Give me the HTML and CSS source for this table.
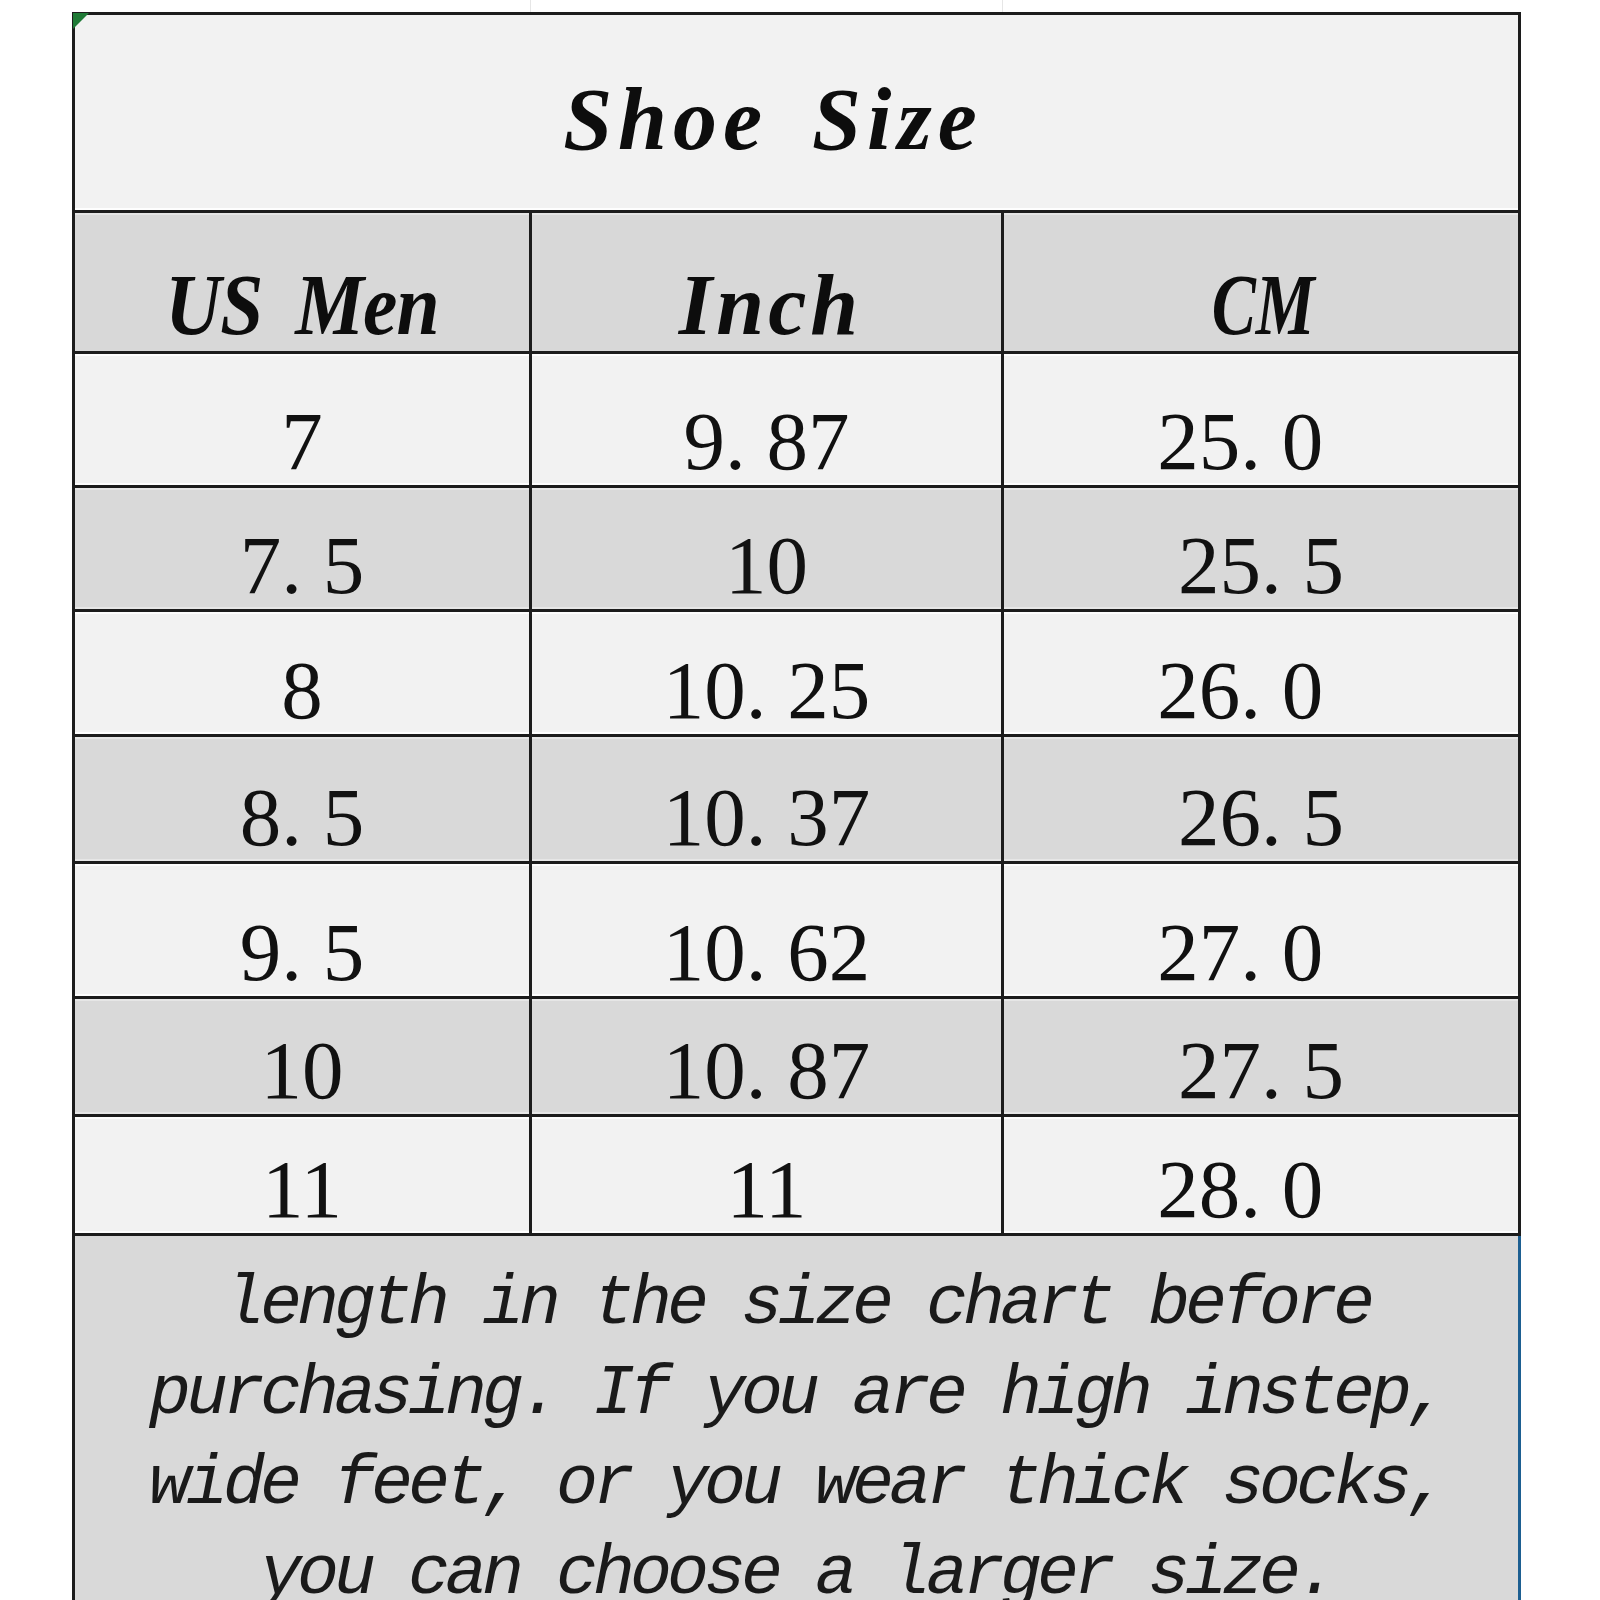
FILE: index.html
```html
<!DOCTYPE html>
<html lang="en">
<head>
<meta charset="utf-8">
<title>Shoe Size</title>
<link rel="stylesheet" href="styles.css">
</head>
<body>
<div class="top-strip"><span></span><span></span><span></span></div>
<div class="sheet">
  <div class="grid">
    <div class="cell title"><span class="corner"></span><span class="title-text">Shoe Size</span></div>

    <div class="cell head"><span class="label us">US Men</span></div>
    <div class="cell head"><span class="label inch">Inch</span></div>
    <div class="cell head"><span class="label cm">CM</span></div>

    <div class="cell light"><span class="num">7</span></div>
    <div class="cell light"><span class="num">9<span class="dot">.</span>87</span></div>
    <div class="cell light"><span class="num trail">25<span class="dot">.</span>0</span></div>

    <div class="cell dark"><span class="num">7<span class="dot">.</span>5</span></div>
    <div class="cell dark"><span class="num">10</span></div>
    <div class="cell dark"><span class="num">25<span class="dot">.</span>5</span></div>

    <div class="cell light"><span class="num">8</span></div>
    <div class="cell light"><span class="num">10<span class="dot">.</span>25</span></div>
    <div class="cell light"><span class="num trail">26<span class="dot">.</span>0</span></div>

    <div class="cell dark"><span class="num">8<span class="dot">.</span>5</span></div>
    <div class="cell dark"><span class="num">10<span class="dot">.</span>37</span></div>
    <div class="cell dark"><span class="num">26<span class="dot">.</span>5</span></div>

    <div class="cell light"><span class="num">9<span class="dot">.</span>5</span></div>
    <div class="cell light"><span class="num">10<span class="dot">.</span>62</span></div>
    <div class="cell light"><span class="num trail">27<span class="dot">.</span>0</span></div>

    <div class="cell dark"><span class="num">10</span></div>
    <div class="cell dark"><span class="num">10<span class="dot">.</span>87</span></div>
    <div class="cell dark"><span class="num">27<span class="dot">.</span>5</span></div>

    <div class="cell light"><span class="num">11</span></div>
    <div class="cell light"><span class="num">11</span></div>
    <div class="cell light"><span class="num trail">28<span class="dot">.</span>0</span></div>
  </div>
  <div class="note">
    <div class="line">length in the size chart before</div>
    <div class="line">purchasing. If you are high instep,</div>
    <div class="line">wide feet, or you wear thick socks,</div>
    <div class="line">you can choose a larger size.</div>
  </div>
</div>
</body>
</html>
```

FILE: styles.css
```css
html, body {
  margin: 0;
  padding: 0;
  background: #ffffff;
  height: 1600px;
  overflow: hidden;
}

.top-strip {
  margin-left: 72px;
  width: 1449px;
  height: 12px;
  box-sizing: border-box;
  padding: 0 3px;
  display: grid;
  grid-template-columns: 454px 469px 514px;
  column-gap: 3px;
}

.top-strip span + span {
  border-left: 1px solid #e6e6e6;
  margin-left: -2px;
}

.sheet {
  margin-left: 72px;
  width: 1449px;
}

.grid {
  display: grid;
  grid-template-columns: 454px 469px 514px;
  grid-template-rows: 195px 138px 131px 121px 122px 124px 132px 115px 116px;
  gap: 3px;
  padding: 3px;
  background: #1c1c1c;
}

.cell {
  display: flex;
  justify-content: center;
  align-items: flex-end;
  color: #111111;
}

.light {
  background: #f2f2f2;
  box-shadow: inset 0 2px 0 rgba(255, 255, 255, 0.8), inset 0 -2px 0 rgba(255, 255, 255, 0.9);
  padding-bottom: 2px;
}

.dark {
  background: #d9d9d9;
  box-shadow: inset 0 2px 0 rgba(255, 255, 255, 0.35), inset 0 -2px 0 rgba(255, 255, 255, 0.35);
  padding-bottom: 2px;
}

.title {
  grid-column: 1 / -1;
  position: relative;
  background: #f2f2f2;
  box-shadow: inset 0 -2px 0 rgba(255, 255, 255, 0.9);
  padding: 0 47px 46px 0;
}

.corner {
  position: absolute;
  top: -2px;
  left: -2px;
  width: 0;
  height: 0;
  border-top: 16px solid #1f7a36;
  border-right: 16px solid transparent;
}

.title-text {
  font-family: "Liberation Serif", "Times New Roman", serif;
  font-style: italic;
  font-weight: bold;
  font-size: 88px;
  line-height: 1;
  letter-spacing: 6px;
  word-spacing: 16px;
  color: #0d0d0d;
}

.head {
  background: #d8d8d8;
  box-shadow: inset 0 2px 0 rgba(255, 255, 255, 0.35);
  padding-bottom: 3px;
}

.label {
  display: inline-block;
  font-family: "Liberation Serif", "Times New Roman", serif;
  font-style: italic;
  font-weight: bold;
  font-size: 86px;
  line-height: 1;
  color: #0d0d0d;
}

.us {
  letter-spacing: -1px;
  word-spacing: 16px;
  transform: scaleX(0.9);
}

.inch {
  letter-spacing: 4px;
  padding-left: 8px;
}

.cm {
  transform: scaleX(0.77);
  padding-left: 6px;
}

.num {
  display: block;
  font-family: "Liberation Serif", "Times New Roman", serif;
  font-size: 83px;
  line-height: 1;
  color: #111111;
}

.dot {
  display: inline-block;
  width: 0.5em;
  text-align: left;
}

.trail {
  padding-right: 0.5em;
}

.note {
  height: 364px;
  box-sizing: border-box;
  background: #d9d9d9;
  border-left: 3px solid #1c1c1c;
  border-right: 3px solid #1d5f91;
  padding-top: 24px;
  overflow: hidden;
  font-family: "Liberation Mono", "Courier New", monospace;
  font-style: italic;
  font-size: 70px;
  line-height: 90px;
  letter-spacing: -5px;
  text-align: center;
  color: #1a1a1a;
}

.line {
  white-space: pre;
}
```
